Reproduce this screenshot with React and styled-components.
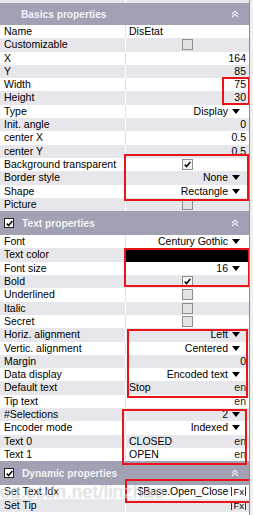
import React from 'react';
import styled, { createGlobalStyle } from 'styled-components';

const GlobalStyle = createGlobalStyle`
  body {
    margin: 0;
    background: #f0f0f0;
    font-family: "Liberation Sans", Arial, sans-serif;
  }
`;

const ROW_H = 13.3;

const Panel = styled.div`
  position: relative;
  width: 249px;
  height: 515px;
  overflow: hidden;
  background: #fff;
  border-right: 1px solid #8c8c94;
`;

const TopStrip = styled.div`
  display: grid;
  grid-template-columns: 125px 1fr;
  height: 3px;
  background: #e6e6eb;
  & > div + div {
    border-left: 1px solid #fff;
  }
`;

const SectionHeader = styled.div`
  display: flex;
  align-items: center;
  height: ${p => p.$h}px;
  padding: 0 10px 0 ${p => (p.$check ? 4 : 21)}px;
  gap: 8px;
  background: #a1a1b3;
  color: #f2f2f7;
  font-size: 10.2px;
  font-weight: bold;
  box-sizing: border-box;
`;

const HeaderTitle = styled.span`
  flex: 1;
`;

const HeaderCheck = styled.span`
  width: 8px;
  height: 8px;
  background: #fff;
  border: 1px solid #222;
  display: flex;
  align-items: center;
  justify-content: center;
`;

const Row = styled.div`
  display: grid;
  grid-template-columns: 125px 1fr;
  height: ${ROW_H}px;
  background: ${p => (p.$alt ? '#e6e6eb' : '#ffffff')};
  font-size: 10.5px;
  line-height: ${ROW_H}px;
  color: #000;
`;

const Label = styled.div`
  padding-left: 4px;
  white-space: nowrap;
  overflow: hidden;
`;

const Value = styled.div`
  display: flex;
  align-items: center;
  justify-content: ${p => p.$justify || 'flex-end'};
  padding: 0 3px 0 3px;
  border-left: 1px solid ${p => (p.$alt ? '#ffffff' : '#e2e2e6')};
  background: ${p => p.$fill || 'transparent'};
  white-space: nowrap;
  overflow: hidden;
  min-width: 0;
`;

const Arrow = styled.span`
  width: 0;
  height: 0;
  margin: 0 6px 0 4px;
  border-left: 4px solid transparent;
  border-right: 4px solid transparent;
  border-top: 5px solid #000;
`;

const Box = styled.span`
  width: 9px;
  height: 9px;
  border: 1px solid #8e8e8e;
  background: ${p => (p.$checked ? '#f4f4f4' : '#e2e2e2')};
  display: flex;
  align-items: center;
  justify-content: center;
`;

const Grow = styled.span`
  flex: 1;
`;

const Lang = styled.span`
  color: #222;
`;

const Fx = styled.span`
  margin-left: 3px;
  padding: 0 1px;
  border-left: 1px solid #333;
  border-right: 1px solid #333;
  line-height: 9px;
  font-size: 9.5px;
`;

const RedBox = styled.div`
  position: absolute;
  box-sizing: border-box;
  border: 2px solid #e8141a;
  pointer-events: none;
`;

const Watermark = styled.div`
  position: absolute;
  left: 0;
  top: 482px;
  font-size: 18px;
  letter-spacing: 0.5px;
  color: rgba(255, 255, 255, 0.55);
  text-shadow: 0 0 1px rgba(60, 60, 60, 0.35);
  pointer-events: none;
  white-space: nowrap;
`;

const Check = () => (
  <svg width="7" height="7" viewBox="0 0 7 7">
    <path d="M0.8 3.6 L2.6 5.6 L6.3 1" stroke="#111" strokeWidth="1.6" fill="none" />
  </svg>
);

const Chevrons = () => (
  <svg width="8" height="8" viewBox="0 0 8 8">
    <path d="M1 4 L4 1.2 L7 4 M1 7 L4 4.2 L7 7" stroke="#f4f4f8" strokeWidth="1.1" fill="none" />
  </svg>
);

const renderValue = (v, alt) => {
  if (!v) return <Value $alt={alt} />;
  switch (v.t) {
    case 'num':
      return <Value $alt={alt}>{v.v}</Value>;
    case 'left':
      return <Value $alt={alt} $justify="flex-start">{v.v}</Value>;
    case 'drop':
      return (
        <Value $alt={alt}>
          {v.v}
          <Arrow />
        </Value>
      );
    case 'check':
      return (
        <Value $alt={alt} $justify="center">
          <Box $checked={v.v}>{v.v && <Check />}</Box>
        </Value>
      );
    case 'color':
      return <Value $alt={alt} $fill={v.v} />;
    case 'lang':
      return (
        <Value $alt={alt}>
          <span>{v.v}</span>
          <Grow />
          <Lang>en</Lang>
        </Value>
      );
    case 'fx':
      return (
        <Value $alt={alt}>
          {v.v}
          <Fx>Fx</Fx>
        </Value>
      );
    default:
      return <Value $alt={alt} />;
  }
};

const sections = [
  {
    title: 'Basics properties',
    h: 22,
    check: false,
    rows: [
      ['Name', { t: 'left', v: 'DisEtat' }],
      ['Customizable', { t: 'check', v: false }],
      ['X', { t: 'num', v: '164' }],
      ['Y', { t: 'num', v: '85' }],
      ['Width', { t: 'num', v: '75' }],
      ['Height', { t: 'num', v: '30' }],
      ['Type', { t: 'drop', v: 'Display' }],
      ['Init. angle', { t: 'num', v: '0' }],
      ['center X', { t: 'num', v: '0.5' }],
      ['center Y', { t: 'num', v: '0.5' }],
      ['Background transparent', { t: 'check', v: true }],
      ['Border style', { t: 'drop', v: 'None' }],
      ['Shape', { t: 'drop', v: 'Rectangle' }],
      ['Picture', { t: 'check', v: false }],
    ],
  },
  {
    title: 'Text properties',
    h: 24,
    check: true,
    rows: [
      ['Font', { t: 'drop', v: 'Century Gothic' }],
      ['Text color', { t: 'color', v: '#000' }],
      ['Font size', { t: 'drop', v: '16' }],
      ['Bold', { t: 'check', v: true }],
      ['Underlined', { t: 'check', v: false }],
      ['Italic', { t: 'check', v: false }],
      ['Secret', { t: 'check', v: false }],
      ['Horiz. alignment', { t: 'drop', v: 'Left' }],
      ['Vertic. alignment', { t: 'drop', v: 'Centered' }],
      ['Margin', { t: 'num', v: '0' }],
      ['Data display', { t: 'drop', v: 'Encoded text' }],
      ['Default text', { t: 'lang', v: 'Stop' }],
      ['Tip text', { t: 'lang', v: '' }],
      ['#Selections', { t: 'drop', v: '2' }],
      ['Encoder mode', { t: 'drop', v: 'Indexed' }],
      ['Text 0', { t: 'lang', v: 'CLOSED' }],
      ['Text 1', { t: 'lang', v: 'OPEN' }],
    ],
  },
  {
    title: 'Dynamic properties',
    h: 24,
    check: true,
    rows: [
      ['Set Text Idx', { t: 'fx', v: '$Base.Open_Close' }],
      ['Set Tip', { t: 'fx', v: '' }],
    ],
  },
];

const marks = [
  { left: 222, top: 77, width: 28, height: 28 },
  { left: 124, top: 154, width: 125, height: 47 },
  { left: 124, top: 248, width: 126, height: 39 },
  { left: 127, top: 329, width: 121, height: 69 },
  { left: 122, top: 409, width: 125, height: 56 },
  { left: 125, top: 479, width: 126, height: 24 },
];

export default function App() {
  return (
    <>
      <GlobalStyle />
      <Panel>
        <TopStrip>
          <div />
          <div />
        </TopStrip>
        {sections.map(sec => (
          <React.Fragment key={sec.title}>
            <SectionHeader $h={sec.h} $check={sec.check}>
              {sec.check && (
                <HeaderCheck>
                  <Check />
                </HeaderCheck>
              )}
              <HeaderTitle>{sec.title}</HeaderTitle>
              <Chevrons />
            </SectionHeader>
            {sec.rows.map(([label, v], i) => {
              const alt = i % 2 === 1;
              return (
                <Row key={label} $alt={alt}>
                  <Label>{label}</Label>
                  {renderValue(v, alt)}
                </Row>
              );
            })}
          </React.Fragment>
        ))}
        {marks.map((m, i) => (
          <RedBox key={i} style={m} />
        ))}
        <Watermark>og.csdn.net/linzhao</Watermark>
      </Panel>
    </>
  );
}
